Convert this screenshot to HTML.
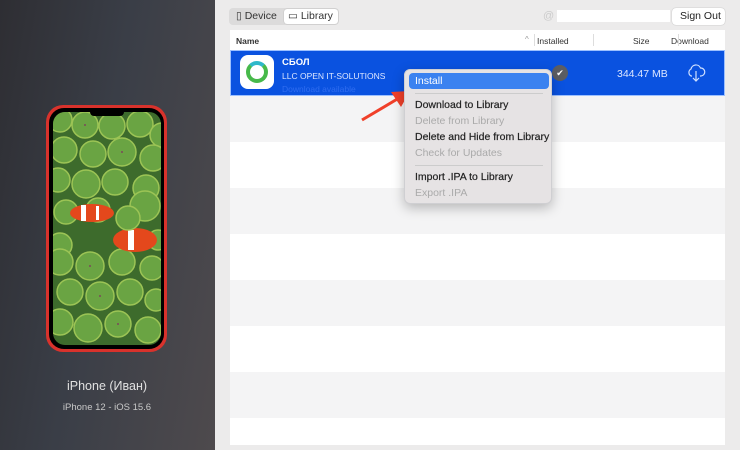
<!DOCTYPE html>
<html><head><meta charset="utf-8"><style>
*{margin:0;padding:0;box-sizing:border-box}
body{width:740px;height:450px;overflow:hidden;font-family:"Liberation Sans",sans-serif;background:#ecebeb;position:relative}
.side{position:absolute;left:0;top:0;width:215px;height:450px;background:linear-gradient(100deg,#2e2e33 0%,#3a3e47 45%,#4e4a4d 100%)}
.t{position:absolute;white-space:nowrap}
.tbl{position:absolute;left:230px;top:30px;width:495px;height:415px;background:#fff}
.row{position:absolute;left:0;width:495px;height:46px}
.menu{position:absolute;left:404px;top:69px;width:148px;height:135px;background:#e6e3e4;border:1px solid #cfcfd2;border-radius:6px;box-shadow:0 4px 12px rgba(0,0,0,.25);font-size:10.5px;color:#222;-webkit-text-stroke:0.2px #222}
.menu div.i{position:absolute;left:10px}
.dis{color:#aaa;-webkit-text-stroke:0}
</style></head><body>
<div class="side">
<svg width="215" height="450" style="position:absolute;left:0;top:0">
<defs><clipPath id="sc"><rect x="53" y="112" width="108" height="233" rx="12"/></clipPath></defs>
<rect x="46" y="105" width="121" height="247" rx="17" fill="#d8322c"/>
<rect x="49" y="108" width="115" height="241" rx="15" fill="#000"/>
<g clip-path="url(#sc)">
<rect x="53" y="112" width="108" height="233" fill="#3d6b2c"/>
<g fill="#6aa443" stroke="#9cc455" stroke-width="1.5">
<circle cx="60" cy="120" r="12"/><circle cx="85" cy="125" r="13"/><circle cx="112" cy="126" r="13"/><circle cx="140" cy="124" r="13"/><circle cx="162" cy="135" r="12"/>
<circle cx="64" cy="150" r="13"/><circle cx="93" cy="154" r="13"/><circle cx="122" cy="152" r="14"/><circle cx="153" cy="158" r="13"/>
<circle cx="58" cy="180" r="12"/><circle cx="86" cy="184" r="14"/><circle cx="115" cy="182" r="13"/><circle cx="146" cy="188" r="13"/>
<circle cx="66" cy="212" r="12"/><circle cx="98" cy="210" r="12"/><circle cx="145" cy="206" r="15"/>
<circle cx="60" cy="245" r="12"/><circle cx="158" cy="240" r="10"/>
<circle cx="60" cy="262" r="13"/><circle cx="90" cy="266" r="14"/><circle cx="122" cy="262" r="13"/><circle cx="152" cy="268" r="12"/>
<circle cx="70" cy="292" r="13"/><circle cx="100" cy="296" r="14"/><circle cx="130" cy="292" r="13"/><circle cx="156" cy="300" r="11"/>
<circle cx="60" cy="322" r="13"/><circle cx="88" cy="328" r="14"/><circle cx="118" cy="324" r="13"/><circle cx="148" cy="330" r="13"/>
</g>
<g fill="#7a4a5a"><circle cx="85" cy="125" r="1"/><circle cx="122" cy="152" r="1"/><circle cx="90" cy="266" r="1"/><circle cx="100" cy="296" r="1"/><circle cx="118" cy="324" r="1"/></g>
<ellipse cx="92" cy="213" rx="22" ry="9" fill="#e4481c"/><rect x="81" y="205" width="5" height="16" fill="#fff"/><rect x="96" y="206" width="3" height="14" fill="#fff"/>
<ellipse cx="135" cy="240" rx="22" ry="12" fill="#e4481c"/><rect x="128" y="230" width="6" height="20" fill="#fff"/>
<circle cx="128" cy="218" r="12" fill="#6aa443" stroke="#9cc455" stroke-width="1.5"/>
</g>
<rect x="90" y="108" width="34" height="8" rx="4" fill="#000"/>
<text x="107" y="390" font-family="Liberation Sans" font-size="12.5" fill="#e0e0e0" text-anchor="middle">iPhone (Иван)</text>
<text x="107" y="410" font-family="Liberation Sans" font-size="9.5" fill="#c8c8c8" text-anchor="middle">iPhone 12 - iOS 15.6</text>
</svg>
</div>
<div style="position:absolute;left:229px;top:8px;width:110px;height:17px;background:#dcdbdb;border-radius:4px"></div>
<div style="position:absolute;left:284px;top:9px;width:54px;height:15px;background:#fff;border-radius:3px;box-shadow:0 0 1px #999"></div>
<div class="t" style="left:236px;top:10px;font-size:10.5px;color:#333">▯ Device</div>
<div class="t" style="left:288px;top:10px;font-size:10.5px;color:#333">▭ Library</div>
<div class="t" style="left:543px;top:10px;font-size:11px;color:#ccc">@</div>
<div style="position:absolute;left:557px;top:10px;width:113px;height:12px;background:#fff"></div>
<div style="position:absolute;left:672px;top:8px;width:53px;height:17px;background:#fff;border-radius:4px;box-shadow:0 0 1px #999"></div>
<div class="t" style="left:680px;top:10px;font-size:10.5px;color:#222">Sign Out</div>
<div class="tbl">
<div class="t" style="left:6px;top:6px;font-size:8.5px;font-weight:bold;color:#333">Name</div>
<div class="t" style="left:295px;top:5px;font-size:8px;color:#999">^</div>
<div class="t" style="left:307px;top:6px;font-size:8.5px;color:#333">Installed</div>
<div class="t" style="left:403px;top:6px;font-size:8.5px;color:#333">Size</div>
<div class="t" style="left:441px;top:6px;font-size:8.5px;color:#333">Download</div>
<div style="position:absolute;left:304px;top:4px;width:1px;height:12px;background:#ddd"></div>
<div style="position:absolute;left:363px;top:4px;width:1px;height:12px;background:#ddd"></div>
<div style="position:absolute;left:448px;top:4px;width:1px;height:12px;background:#ddd"></div>
<div class="row" style="top:20px;background:#0a52e0;border:1px solid #9cc0ff"></div>
<div class="row" style="top:66px;background:#f4f4f5"></div>
<div class="row" style="top:158px;background:#f4f4f5"></div>
<div class="row" style="top:250px;background:#f4f4f5"></div>
<div class="row" style="top:342px;background:#f4f4f5"></div>
<div style="position:absolute;left:10px;top:25px;width:34px;height:34px;background:#fff;border-radius:8px"></div>
<div style="position:absolute;left:16px;top:31px;width:22px;height:22px;border-radius:50%;border:4px solid #47b94a;border-top-color:#2fb8c9"></div>
<div class="t" style="left:52px;top:27px;font-size:9.5px;color:#fff;font-weight:bold">СБОЛ</div>
<div class="t" style="left:52px;top:41px;font-size:8.5px;color:#dce6ff">LLC OPEN IT-SOLUTIONS</div>
<div class="t" style="left:52px;top:54px;font-size:8.5px;color:#2f6cf0">Download available</div>
<div style="position:absolute;left:322px;top:35px;width:16px;height:16px;border-radius:50%;background:#5b5d63;color:#fff;font-size:9px;text-align:center;line-height:16px">✔</div>
<div class="t" style="left:387px;top:38px;font-size:10.5px;color:#dce6ff">344.47 MB</div>
<svg style="position:absolute;left:456px;top:33px" width="20" height="20" viewBox="0 0 20 20" fill="none" stroke="#cfe0ff" stroke-width="1.2"><path d="M6 13H5a4 4 0 0 1 0-7 5 5 0 0 1 9.5-1A3.5 3.5 0 0 1 15 13h-1"/><path d="M10 8v10M7 15l3 3 3-3"/></svg>
</div>
<svg style="position:absolute;left:355px;top:85px" width="60" height="40"><path d="M7 35L44 13" stroke="#f0402a" stroke-width="3"/><path d="M55 6L36 7L46 22Z" fill="#f0402a"/></svg>
<div class="menu">
<div style="position:absolute;left:4px;top:3px;width:140px;height:16px;background:#3b82f0;border-radius:4px"></div>
<div class="i" style="top:5px;color:#fff;-webkit-text-stroke:0">Install</div>
<div style="position:absolute;left:10px;top:23px;width:128px;height:1px;background:#ccc"></div>
<div class="i" style="top:29px">Download to Library</div>
<div class="i dis" style="top:45px">Delete from Library</div>
<div class="i" style="top:61px">Delete and Hide from Library</div>
<div class="i dis" style="top:77px">Check for Updates</div>
<div style="position:absolute;left:10px;top:95px;width:128px;height:1px;background:#ccc"></div>
<div class="i" style="top:101px">Import .IPA to Library</div>
<div class="i dis" style="top:117px">Export .IPA</div>
</div>
</body></html>
